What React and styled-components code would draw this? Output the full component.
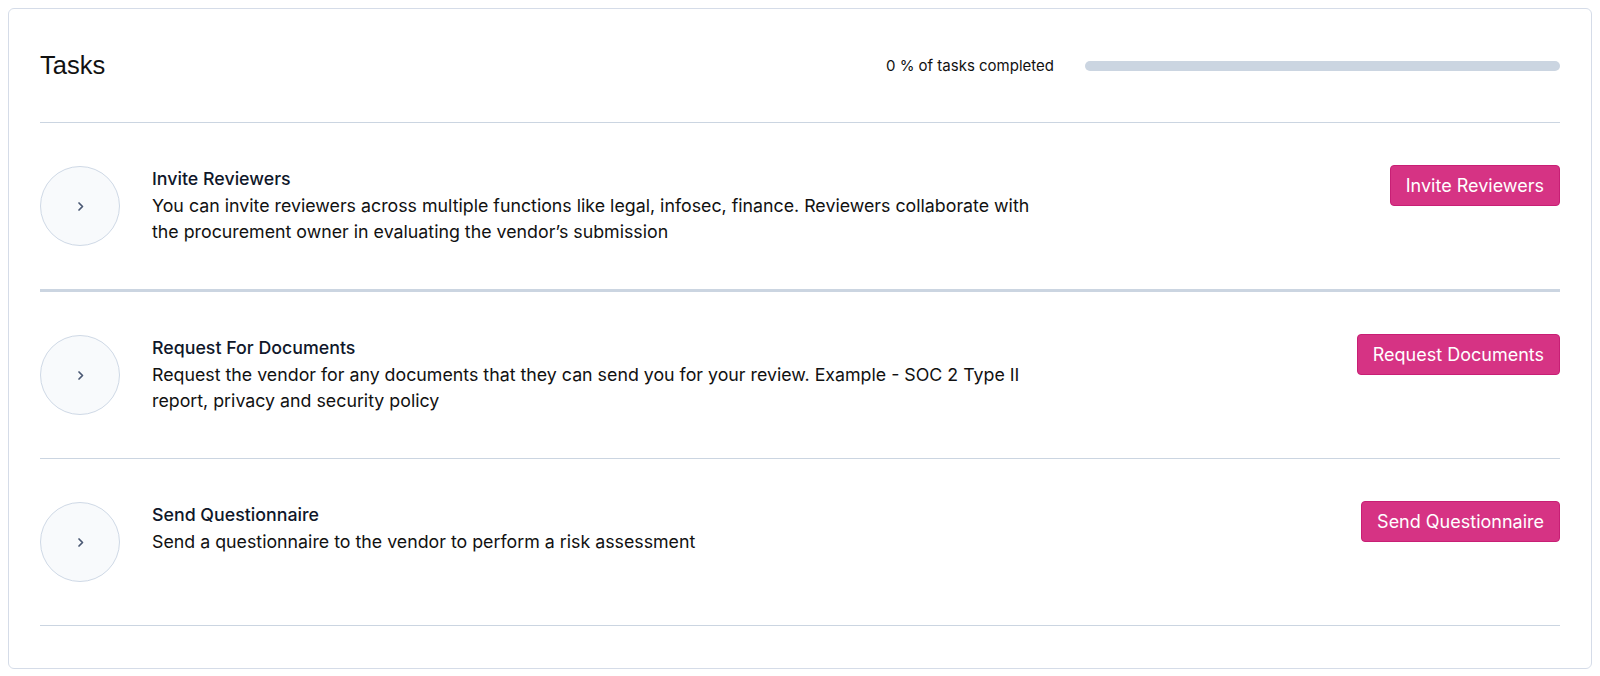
import styled, { createGlobalStyle } from "styled-components";

const GlobalStyle = createGlobalStyle`
  body {
    margin: 8px;
    background: #ffffff;
    font-family: "Inter", "Liberation Sans", sans-serif;
    color: #111111;
  }
  * {
    box-sizing: border-box;
  }
`;

const Card = styled.section`
  border: 1px solid #d5dce8;
  border-radius: 6px;
  padding: 0 31px 42px;
  background: #fff;
`;

const Header = styled.div`
  display: flex;
  align-items: center;
  justify-content: space-between;
  height: 114px;
  border-bottom: 1px solid #cbd5e1;
`;

const Title = styled.h1`
  margin: 0;
  font-family: "Liberation Sans", Arial, sans-serif;
  font-size: 25.5px;
  font-weight: 400;
  color: #111;
`;

const Progress = styled.div`
  display: flex;
  align-items: center;
  gap: 31px;
`;

const ProgressLabel = styled.span`
  font-size: 15px;
  color: #111;
`;

const Track = styled.div`
  width: 475px;
  height: 10px;
  border-radius: 5px;
  background: #cbd5e1;
  overflow: hidden;
`;

const Fill = styled.div`
  height: 100%;
  background: #d63384;
`;

const Row = styled.div`
  display: flex;
  align-items: flex-start;
  padding: 43px 0;
  border-bottom: ${(p) => (p.$active ? "3px solid #cbd5e1" : "1px solid #cbd5e1")};
`;

const Toggle = styled.button`
  flex: none;
  width: 80px;
  height: 80px;
  border-radius: 50%;
  border: 1px solid #cfd9e6;
  background: #f8fafc;
  display: flex;
  align-items: center;
  justify-content: center;
  padding: 0;
  margin-right: 32px;
  cursor: pointer;
  color: #4a5873;
`;

const Body = styled.div`
  flex: 1;
  max-width: 900px;
`;

const TaskName = styled.div`
  font-size: 17.8px;
  font-weight: 500;
  line-height: 26.5px;
  color: #0f172a;
`;

const TaskText = styled.p`
  margin: 0;
  font-size: 17.8px;
  line-height: 26.5px;
  color: #111;
`;

const Action = styled.button`
  flex: none;
  margin-left: auto;
  height: 41px;
  margin-top: -1px;
  padding: 0 15px;
  border-radius: 4px;
  border: 1px solid #c81f75;
  background: #d63384;
  color: #fff;
  font-family: inherit;
  font-size: 18px;
  cursor: pointer;
`;

const tasks = [
  {
    id: "reviewers",
    name: "Invite Reviewers",
    text: "You can invite reviewers across multiple functions like legal, infosec, finance. Reviewers collaborate with the procurement owner in evaluating the vendor\u2019s submission",
    action: "Invite Reviewers",
    active: true,
  },
  {
    id: "documents",
    name: "Request For Documents",
    text: "Request the vendor for any documents that they can send you for your review. Example - SOC 2 Type II report, privacy and security policy",
    action: "Request Documents",
  },
  {
    id: "questionnaire",
    name: "Send Questionnaire",
    text: "Send a questionnaire to the vendor to perform a risk assessment",
    action: "Send Questionnaire",
  },
];

function Chevron() {
  return (
    <svg width="9" height="11" viewBox="0 0 9 11" fill="none">
      <path d="M3 2l3.5 3.5L3 9" stroke="currentColor" strokeWidth="1.7" strokeLinecap="round" strokeLinejoin="round" />
    </svg>
  );
}

export default function App() {
  const done = 0;
  const pct = Math.round((done / tasks.length) * 100);

  return (
    <>
      <GlobalStyle />
      <Card>
        <Header>
          <Title>Tasks</Title>
          <Progress>
            <ProgressLabel>{pct} % of tasks completed</ProgressLabel>
            <Track>
              <Fill style={{ width: `${pct}%` }} />
            </Track>
          </Progress>
        </Header>
        {tasks.map((t) => (
          <Row key={t.id} $active={t.active}>
            <Toggle aria-label={t.name}>
              <Chevron />
            </Toggle>
            <Body>
              <TaskName>{t.name}</TaskName>
              <TaskText>{t.text}</TaskText>
            </Body>
            <Action>{t.action}</Action>
          </Row>
        ))}
      </Card>
    </>
  );
}
